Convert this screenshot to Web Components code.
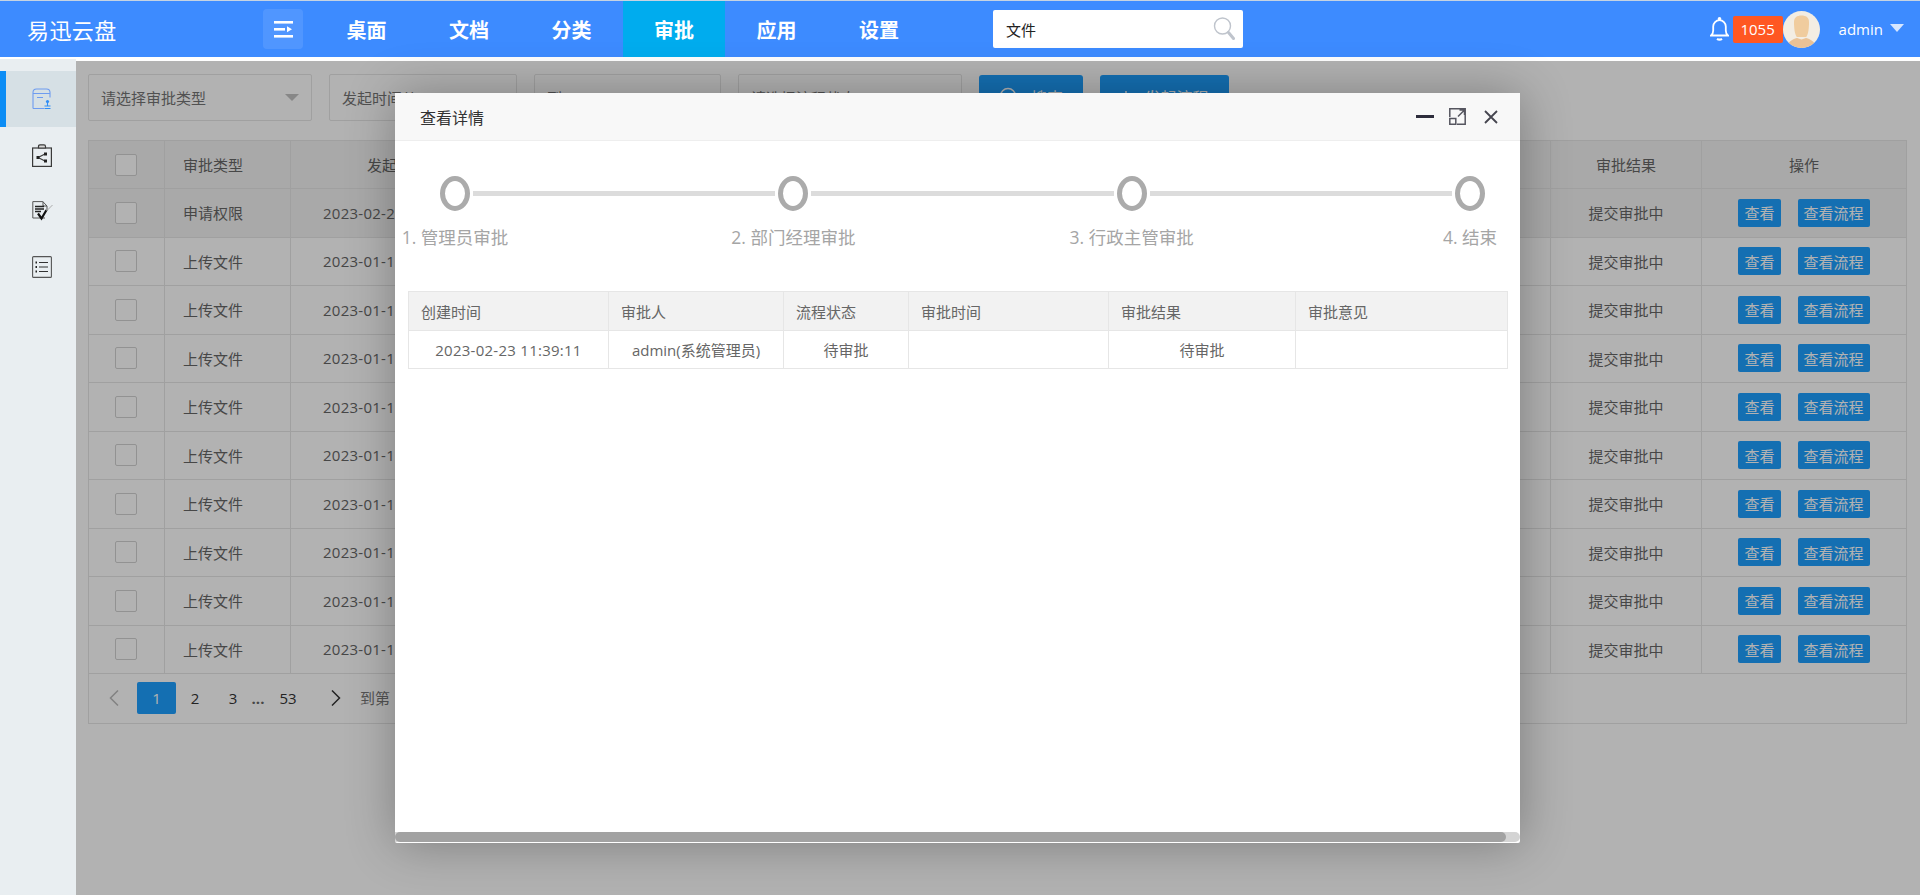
<!DOCTYPE html>
<html lang="zh">
<head>
<meta charset="utf-8">
<title>易迅云盘</title>
<style>
  html, body { margin: 0; height: 100%; overflow: hidden; background: #fff; }
  body { font-family: "Open Sans", "Noto Sans CJK SC", sans-serif; color: #666; }
</style>
</head>
<body>
<app-shell></app-shell>
<script>
const FONT = `"Open Sans", "Noto Sans CJK SC", sans-serif`

const headerTemplate = document.createElement('template')
headerTemplate.innerHTML = `
  <style>
    :host {
      display: flex;
      align-items: center;
      height: 56px;
      border-top: 1px solid #c6d3e2;
      background: #3d8bff;
      color: #fff;
      font-family: ${FONT};
    }
    #logo { width: 236px; padding-left: 27px; font-size: 22px; letter-spacing: .4px; }
    #toggle {
      width: 40px; height: 40px; border-radius: 4px;
      background: rgba(255,255,255,.1);
      display: flex; align-items: center; justify-content: center;
    }
    nav { display: flex; height: 100%; margin-left: 12.25px; }
    nav a { width: 102.5px; display: flex; align-items: center; justify-content: center; font-size: 20px; font-weight: 700; }
    nav a.active { background: #00acee; }
    #search {
      margin-left: 62.75px; width: 250px; height: 38px; box-sizing: border-box;
      background: #fff; border-radius: 2px; color: #222; font-size: 15px;
      display: flex; align-items: center; justify-content: space-between; padding: 0 8px 0 13px;
    }
    #right { margin-left: auto; margin-right: 16px; display: flex; align-items: center; }
    #badge {
      height: 27px; width: 50px; margin-left: 4px; border-radius: 2px; background: #ff5722;
      font-size: 15px; display: flex; align-items: center; justify-content: center;
    }
    #user { margin-left: 19px; font-size: 15px; }
    #caret { margin-left: 7px; width: 0; height: 0; border: 7px solid transparent; border-top: 8px solid #d6e6ff; border-bottom: 0; margin-top: -3px; }
    svg { display: block; }
  </style>
  <div id="logo">易迅云盘</div>
  <div id="toggle">
    <svg width="19" height="17" viewBox="0 0 19 17" fill="#fff"><rect x="0" y="0" width="19" height="2.6"/><rect x="0" y="7" width="11" height="2.6"/><path d="M13 5.2l5 3-5 3z"/><rect x="0" y="14" width="19" height="2.6"/></svg>
  </div>
  <nav>
    <a>桌面</a><a>文档</a><a>分类</a><a class="active">审批</a><a>应用</a><a>设置</a>
  </nav>
  <div id="search">
    <span>文件</span>
    <svg width="22" height="26" viewBox="0 0 22 26" fill="none" stroke="#bfc4cc"><circle cx="9.5" cy="10" r="8" stroke-width="1.4"/><path d="M15.5 16.5l5 6" stroke-width="3" stroke-linecap="round"/></svg>
  </div>
  <div id="right">
    <svg width="19" height="24" viewBox="0 0 19 24" fill="none" stroke="#fff" stroke-width="1.8"><path d="M1 18.5h17c-1.6-1.2-2.2-2.5-2.2-5V9.5a6.3 6.3 0 0 0-12.6 0v4c0 2.500-.6 3.800-2.200 5z"/><circle cx="9.500" cy="1.800" r=".9" fill="#fff"/><path d="M7 21.800q2.500 1.800 5 0" stroke-width="2.200"/></svg>
    <div id="badge">1055</div>
    <svg width="37" height="37" viewBox="0 0 37 37"><defs><clipPath id="c"><circle cx="18.500" cy="18.500" r="18.500"/></clipPath></defs><g clip-path="url(#c)"><rect width="37" height="37" fill="#f3ede3"/><path d="M11 11c0-4.500 3-6.500 7.500-6.500s7.500 2 7.500 6.500c0 6-.6 12-2.800 15h-9.400C11.600 23 11 17 11 11z" fill="#f0cc9e"/><path d="M4 37c.5-6 5-8.500 10-10l4.500 1.500L23 27c5 1.500 9.500 4 10 10z" fill="#e9c196"/></g></svg>
    <div id="user">admin</div>
    <div id="caret"></div>
  </div>
`

class AppHeader extends HTMLElement {
  connectedCallback() {
    this.attachShadow({ mode: 'open' })
    this.shadowRoot.appendChild(headerTemplate.content.cloneNode(true))
  }
}
customElements.define('app-header', AppHeader)

const sideTemplate = document.createElement('template')
sideTemplate.innerHTML = `
  <style>
    :host { display: block; width: 76px; flex: none; background: #e9eef1; padding-top: 12px; box-sizing: border-box; }
    div { height: 56px; display: flex; align-items: center; justify-content: center; box-sizing: border-box; padding-left: 8px; }
    div.active { background: #d6e0e5; border-left: 6px solid #0c8df5; padding-left: 2px; }
    svg { display: block; }
  </style>
  <div class="active">
    <svg width="20" height="22" viewBox="0 0 20 22" fill="none" stroke="#6e9cf0" stroke-width="1.100"><path d="M1 20.500V4.500Q1 1 4.500 1h10Q18 1 18 4.500v5M1 5.500h17M5 9.500h6M1 20.500h11"/><circle cx="15.500" cy="13.500" r="1.600" fill="#2f8df5" stroke="none"/><path d="M15.500 14v4M12.500 18h6M12.500 20.500h6" stroke="#2f8df5"/></svg>
  </div>
  <div>
    <svg width="20" height="23" viewBox="0 0 20 23" fill="none" stroke="#3a3a3a" stroke-width="1.200"><rect x=".6" y="4" width="18.800" height="18.400"/><path d="M6.500 4V2.500Q6.500 .8 8 .8h4q1.500 0 1.500 1.700V4z" fill="#d9d9d9"/><path d="M6 13.500l7-3.500M6 13.500l7 3.500"/><rect x="4.500" y="12" width="3" height="3" fill="#222" stroke="none"/><rect x="12" y="8.500" width="3" height="3" fill="#222" stroke="none"/><rect x="12" y="15.500" width="3" height="3" fill="#222" stroke="none"/></svg>
  </div>
  <div>
    <svg width="21" height="20" viewBox="0 0 21 20" fill="none" stroke="#555" stroke-width="1"><path d="M13 17H.8V.6h10L15 5v5M11 .6V5h4"/><path d="M3 5.500h9M3 8h9M3 10.500h6" stroke="#222" stroke-width="1.300"/><path d="M6 12.500l3.500 5 5-8.500" stroke="#111" stroke-width="2.200"/><path d="M14.500 10l6-6" stroke="#aaa"/></svg>
  </div>
  <div>
    <svg width="20" height="22" viewBox="0 0 20 22" fill="none" stroke="#555" stroke-width="1.100"><rect x=".6" y=".6" width="18.800" height="20.800" rx="1"/><path d="M7 6.500h9M7 11h9M7 15.500h9" stroke="#333" stroke-width="1.200"/><path d="M3.500 6.500h1.500M3.500 11h1.500M3.500 15.500h1.500" stroke="#222" stroke-width="1.800"/></svg>
  </div>
`

class SideNav extends HTMLElement {
  connectedCallback() {
    this.attachShadow({ mode: 'open' })
    this.shadowRoot.appendChild(sideTemplate.content.cloneNode(true))
  }
}
customElements.define('side-nav', SideNav)

const filterTemplate = document.createElement('template')
filterTemplate.innerHTML = `
  <style>
    :host { display: flex; gap: 17px; height: 47px; font-size: 15px; color: #757575; font-family: ${FONT}; }
    .box {
      box-sizing: border-box; border: 1px solid #e6e6e6; border-radius: 2px; background: #fff;
      display: flex; align-items: center; justify-content: space-between; padding: 0 12px;
    }
    .caret { width: 0; height: 0; border: 7px solid transparent; border-top: 7px solid #c2c2c2; border-bottom: 0; }
    .btn {
      box-sizing: border-box; height: 46px; margin-top: 1px; border-radius: 3px; background: #1e9fff; color: #fff;
      display: flex; align-items: center; justify-content: center; gap: 12px; font-size: 16px; padding-bottom: 2px;
    }
    svg { display: block; }
  </style>
  <div class="box" style="width:224px"><span>请选择审批类型</span><i class="caret"></i></div>
  <div class="box" style="width:188px"><span>发起时间从</span></div>
  <div class="box" style="width:187px"><span>到</span></div>
  <div class="box" style="width:224px"><span>请选择流程状态</span></div>
  <div class="btn" style="width:104px">
    <svg width="20" height="20" viewBox="0 0 20 20" fill="none" stroke="#fff" stroke-width="1.500"><circle cx="9" cy="9" r="7.500"/><path d="M14.500 14.500l4 4"/></svg>
    <span>搜索</span>
  </div>
  <div class="btn" style="width:129px">
    <svg width="12" height="12" viewBox="0 0 12 12" stroke="#fff" stroke-width="1.500"><path d="M6 0v12M0 6h12"/></svg>
    <span>发起流程</span>
  </div>
`

class FilterBar extends HTMLElement {
  connectedCallback() {
    this.attachShadow({ mode: 'open' })
    this.shadowRoot.appendChild(filterTemplate.content.cloneNode(true))
  }
}
customElements.define('filter-bar', FilterBar)

const tableTemplate = document.createElement('template')
tableTemplate.innerHTML = `
  <style>
    :host { display: block; margin-top: 19px; border: 1px solid #e6e6e6; border-bottom: 0; font-size: 15px; color: #666; font-family: ${FONT}; background: #fff; }
    .row {
      display: grid; grid-template-columns: 76px 126px 210px 1fr 151px 204px;
      height: 48.5px; box-sizing: border-box; border-bottom: 1px solid #e6e6e6;
    }
    .row.head { height: 48px; }
    .row.head, .row.hover { background: #f2f2f2; }
    .row > div { display: flex; align-items: center; justify-content: center; border-right: 1px solid #e6e6e6; box-sizing: border-box; }
    .row > div:last-child { border-right: 0; }
    .row > div:nth-child(2) { justify-content: flex-start; padding-left: 18px; }
    .row > div.date { justify-content: flex-start; letter-spacing: .26px; white-space: nowrap; padding-left: 32px; }
    .row > div.date.t { padding-left: 76px; letter-spacing: 0; }
    .check { width: 22px; height: 22px; box-sizing: border-box; border: 1px solid #d2d2d2; border-radius: 2px; background: #fff; margin-left: -1px; }
    .ops { gap: 17px; }
    .ops span { height: 28px; background: #1e9fff; color: #fff; border-radius: 2px; padding: 0 6px; display: flex; align-items: center; }
  </style>
  <div id="rows"></div>
`

class ApproveTable extends HTMLElement {
  connectedCallback() {
    this.attachShadow({ mode: 'open' })
    this.shadowRoot.appendChild(tableTemplate.content.cloneNode(true))
    // only what shows beside the dialog is written: the rest of the column lies under it
    const rows = [['申请权限', '2023-02-2']]
    for (let i = 0; i < 9; i++) rows.push(['上传文件', '2023-01-1'])
    let html = `<div class="row head"><div><i class="check"></i></div><div>审批类型</div><div class="date t">发起</div><div></div><div>审批结果</div><div>操作</div></div>`
    rows.forEach((r, index) => {
      html += `<div class="row ${index === 0 ? 'hover' : ''}"><div><i class="check"></i></div><div>${r[0]}</div><div class="date">${r[1]}</div><div></div><div>提交审批中</div><div class="ops"><span>查看</span><span>查看流程</span></div></div>`
    })
    this.shadowRoot.getElementById('rows').innerHTML = html
  }
}
customElements.define('approve-table', ApproveTable)

const pagerTemplate = document.createElement('template')
pagerTemplate.innerHTML = `
  <style>
    :host {
      display: flex; align-items: center; height: 50px; box-sizing: border-box;
      border: 1px solid #e6e6e6; border-top: 0; padding-left: 20px; padding-top: 2px;
      font-size: 15px; color: #333; font-family: ${FONT}; background: #fff;
    }
    a { width: 38px; height: 32px; display: flex; align-items: center; justify-content: center; box-sizing: border-box; margin-top: -4px; }
    a.on { width: 39px; background: #1e9fff; color: #fff; border-radius: 2px; }
    .dots { width: 14px; color: #666; text-align: center; margin-top: -4px; font-size: 15px; font-weight: 700; margin-left: -1px; }
    .to { margin: -4px 0 0 19px; color: #777; }
    svg { display: block; margin-top: -4px; }
  </style>
  <svg width="10" height="16" viewBox="0 0 10 16" fill="none" stroke="#bbb" stroke-width="1.500"><path d="M9 .5L1.500 8 9 15.500"/></svg>
  <a class="on" style="margin-left:18px">1</a><a>2</a><a>3</a><span class="dots">...</span><a style="margin-left:4px">53</a>
  <svg style="margin-left:24px" width="10" height="16" viewBox="0 0 10 16" fill="none" stroke="#333" stroke-width="1.500"><path d="M1 .5L8.500 8 1 15.500"/></svg>
  <span class="to">到第</span>
`

class PagerBar extends HTMLElement {
  connectedCallback() {
    this.attachShadow({ mode: 'open' })
    this.shadowRoot.appendChild(pagerTemplate.content.cloneNode(true))
  }
}
customElements.define('pager-bar', PagerBar)

const stepsTemplate = document.createElement('template')
stepsTemplate.innerHTML = `
  <style>
    :host {
      display: grid; grid-template-columns: 30px 1fr 30px 1fr 30px 1fr 30px; grid-template-rows: 35px auto;
      width: 1045px; margin: 0 0 0 45px; align-items: center; font-family: ${FONT};
    }
    .dot { box-sizing: border-box; width: 30px; height: 35px; border: 5px solid #ababab; border-radius: 50%; }
    .line { height: 5px; margin: 0 3px; background: #dcdcdc; }
    .label { grid-row: 2; justify-self: center; white-space: nowrap; margin-top: 13px; line-height: 26px; font-size: 17.500px; color: #a5a5a5; }
  </style>
  <i class="dot"></i><i class="line"></i><i class="dot"></i><i class="line"></i><i class="dot"></i><i class="line"></i><i class="dot"></i>
  <span class="label" style="grid-column:1">1. 管理员审批</span>
  <span class="label" style="grid-column:3">2. 部门经理审批</span>
  <span class="label" style="grid-column:5">3. 行政主管审批</span>
  <span class="label" style="grid-column:7">4. 结束</span>
`

class StepBar extends HTMLElement {
  connectedCallback() {
    this.attachShadow({ mode: 'open' })
    this.shadowRoot.appendChild(stepsTemplate.content.cloneNode(true))
  }
}
customElements.define('step-bar', StepBar)

const flowTemplate = document.createElement('template')
flowTemplate.innerHTML = `
  <style>
    :host { display: block; margin: 0 12px 0 13px; border: 1px solid #e6e6e6; font-size: 15px; color: #666; font-family: ${FONT}; }
    .row { display: grid; grid-template-columns: 200px 175px 125px 200px 187px 1fr; height: 37px; }
    .row.head { height: 39px; box-sizing: border-box; background: #f2f2f2; border-bottom: 1px solid #e6e6e6; }
    .row > div { display: flex; align-items: center; justify-content: center; box-sizing: border-box; border-right: 1px solid #e6e6e6; }
    .row > div:last-child { border-right: 0; }
    .head > div { justify-content: flex-start; padding-left: 12px; }
    .date { letter-spacing: .26px; }
  </style>
  <div class="row head"><div>创建时间</div><div>审批人</div><div>流程状态</div><div>审批时间</div><div>审批结果</div><div>审批意见</div></div>
  <div class="row"><div class="date">2023-02-23 11:39:11</div><div>admin(系统管理员)</div><div>待审批</div><div></div><div>待审批</div><div></div></div>
`

class FlowTable extends HTMLElement {
  connectedCallback() {
    this.attachShadow({ mode: 'open' })
    this.shadowRoot.appendChild(flowTemplate.content.cloneNode(true))
  }
}
customElements.define('flow-table', FlowTable)

const modalTemplate = document.createElement('template')
modalTemplate.innerHTML = `
  <style>
    :host {
      position: absolute; left: 395px; top: 93px; width: 1125px; height: 750px;
      display: flex; flex-direction: column; background: #fff; border-radius: 2px;
      box-shadow: 1px 1px 50px rgba(0,0,0,.3); font-family: ${FONT};
    }
    #title {
      flex: none; height: 48px; box-sizing: border-box; border-bottom: 1px solid #eee; background: #f8f8f8;
      display: flex; align-items: center; padding: 0 22px 0 25px; font-size: 16px; color: #333;
    }
    #title span { margin-right: auto; }
    #title svg { display: block; margin-left: 15px; }
    #body { flex: 1; padding-top: 35px; }
    step-bar { margin-bottom: 41px; }
    #bar { flex: none; height: 10px; margin-bottom: 1px; display: flex; background: #d4d4d4; border-radius: 0 5px 5px 0; }
    #thumb { width: 1111px; background: #a2a2a2; border-radius: 5px; }
  </style>
  <div id="title">
    <span>查看详情</span>
    <svg width="18" height="3" viewBox="0 0 18 3"><rect width="18" height="3" fill="#2e2d3c"/></svg>
    <svg width="17" height="17" viewBox="0 0 17 17" fill="none" stroke="#55555f" stroke-width="1.500"><path d="M8 .8h8.200V16.200H8M.8 9V.8H8M.8 10.500h6v5.700h-6zM9 8.500l6-6M10.500 2h5v5"/></svg>
    <svg style="margin-left:18px" width="14" height="14" viewBox="0 0 14 14" fill="none" stroke="#45454f" stroke-width="1.800"><path d="M1 1l12 12M13 1L1 13"/></svg>
  </div>
  <div id="body">
    <step-bar></step-bar>
    <flow-table></flow-table>
  </div>
  <div id="bar"><div id="thumb"></div></div>
`

class DetailModal extends HTMLElement {
  connectedCallback() {
    this.attachShadow({ mode: 'open' })
    this.shadowRoot.appendChild(modalTemplate.content.cloneNode(true))
  }
}
customElements.define('detail-modal', DetailModal)

const shellTemplate = document.createElement('template')
shellTemplate.innerHTML = `
  <style>
    :host { display: flex; flex-direction: column; height: 895px; position: relative; overflow: hidden; }
    #wrap { flex: 1; display: flex; margin-top: 2px; min-height: 0; }
    main { flex: 1; position: relative; margin-top: 2px; padding: 13px 13px 0 12px; background: #fff; }
    #shade { position: absolute; inset: 0; background: rgba(0,0,0,.3); }
  </style>
  <app-header></app-header>
  <div id="wrap">
    <side-nav></side-nav>
    <main>
      <filter-bar></filter-bar>
      <approve-table></approve-table>
      <pager-bar></pager-bar>
      <div id="shade"></div>
    </main>
  </div>
  <detail-modal></detail-modal>
`

class AppShell extends HTMLElement {
  connectedCallback() {
    this.attachShadow({ mode: 'open' })
    this.shadowRoot.appendChild(shellTemplate.content.cloneNode(true))
  }
}
customElements.define('app-shell', AppShell)
</script>
</body>
</html>
